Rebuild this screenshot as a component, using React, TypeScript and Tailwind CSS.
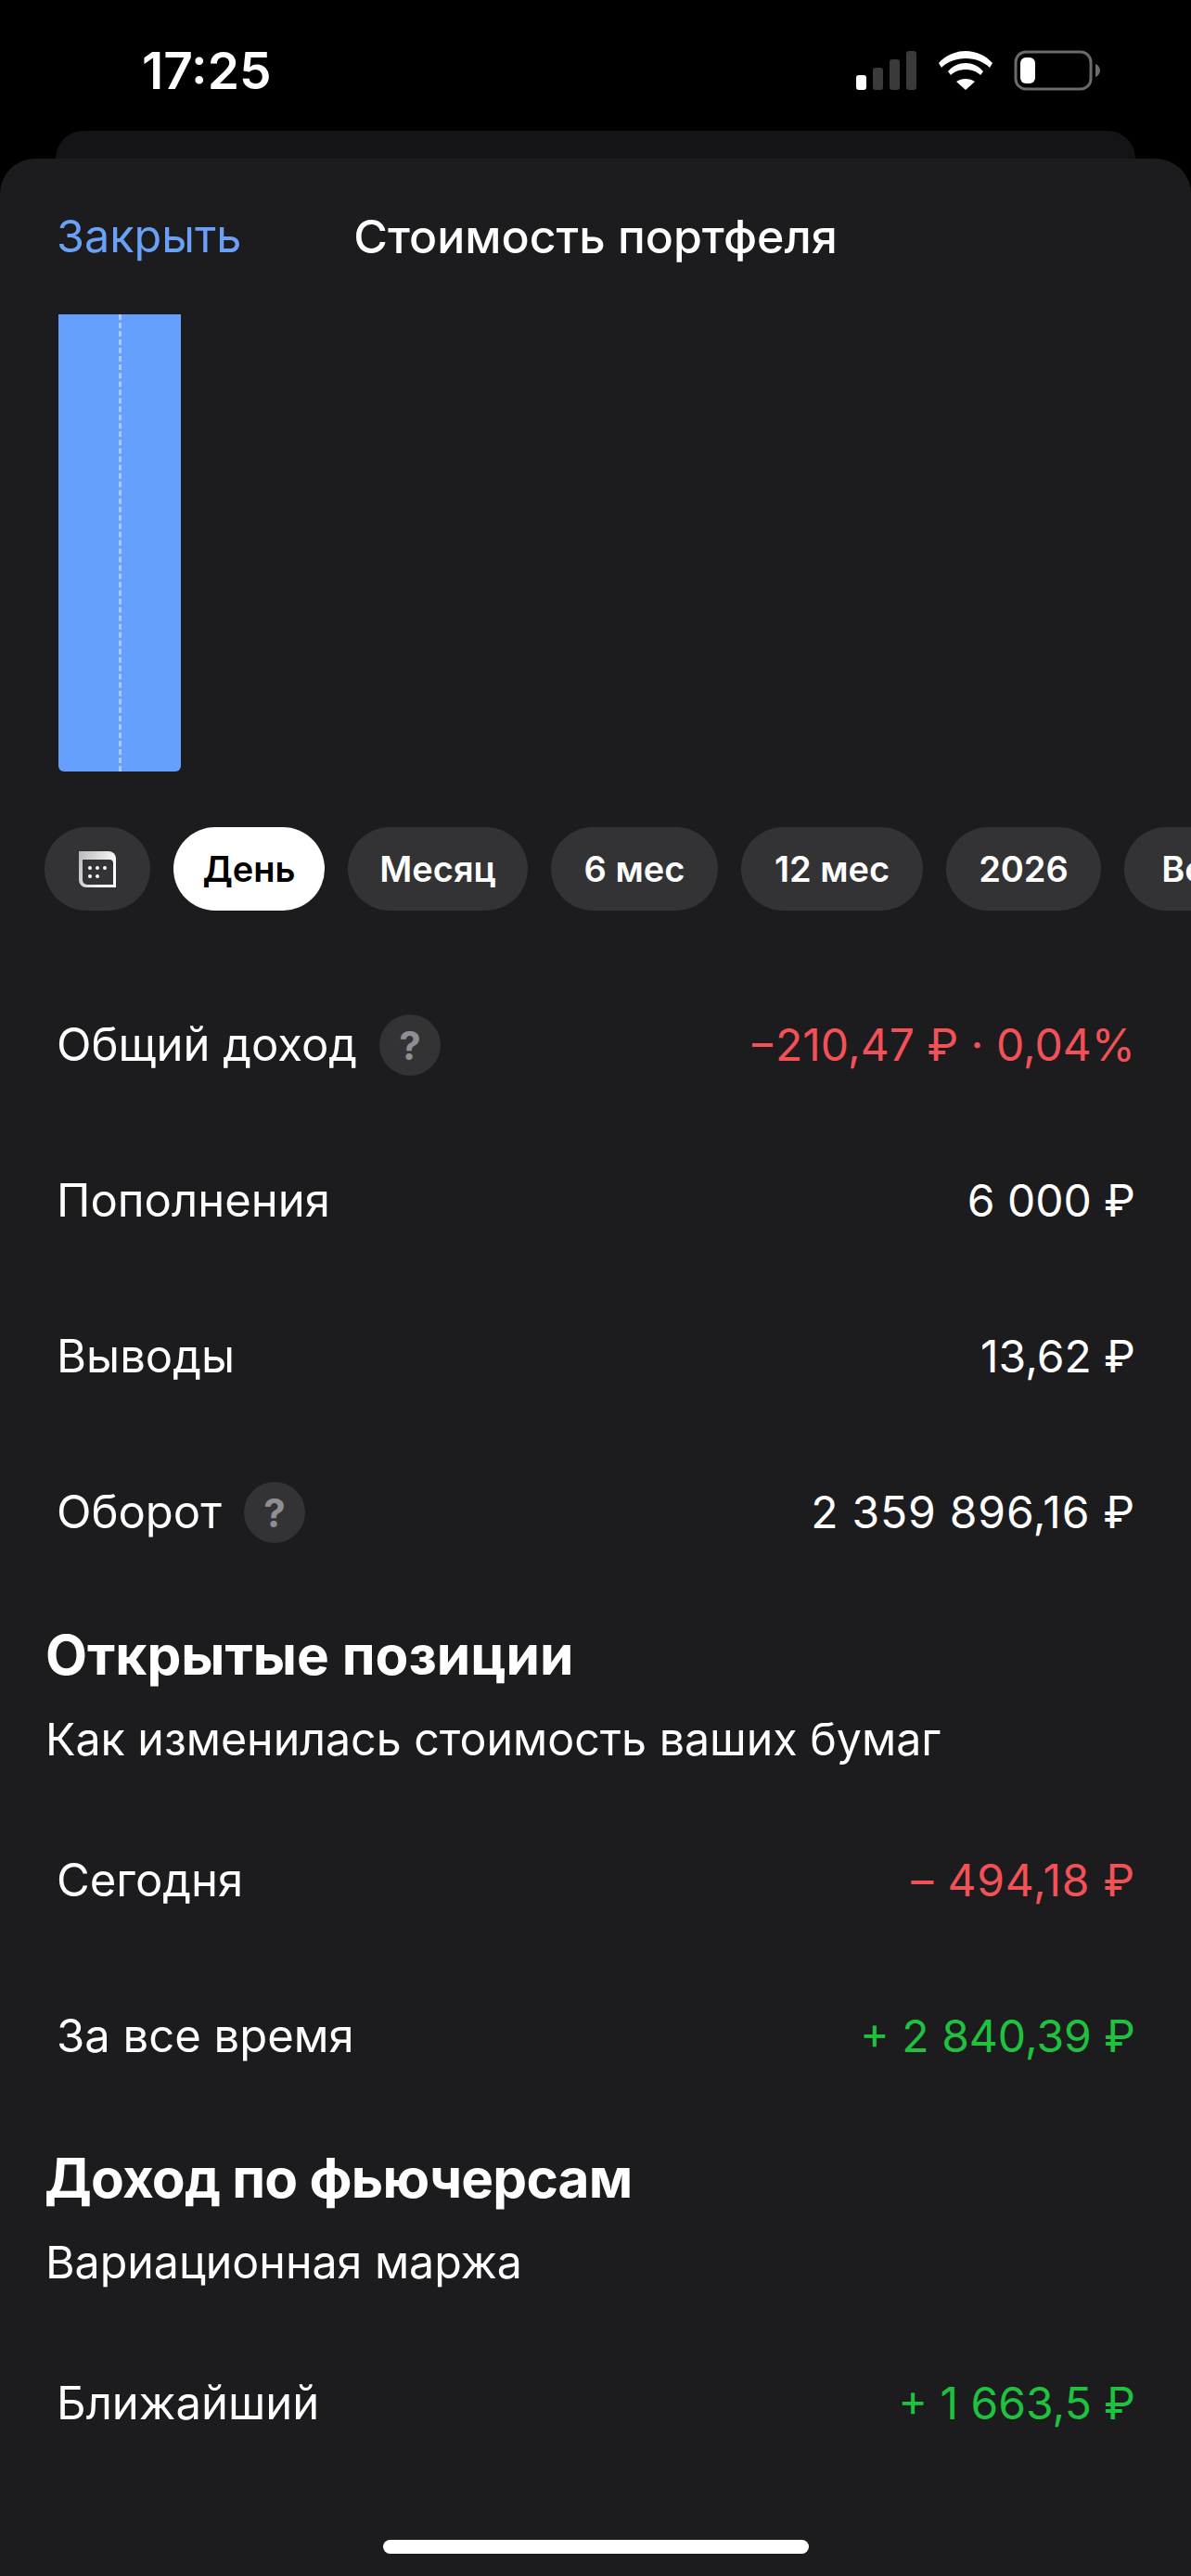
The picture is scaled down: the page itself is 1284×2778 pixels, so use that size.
import React from 'react';

const chips = [
  { label: 'Месяц', width: 'w-[194px]' },
  { label: '6 мес', width: 'w-[180px]' },
  { label: '12 мес', width: 'w-[196px]' },
  { label: '2026', width: 'w-[167px]' },
  { label: 'Все', width: 'w-[150px]' },
];

const Hint = () => (
  <span className="ml-[24px] flex h-[66px] w-[66px] items-center justify-center rounded-full bg-[#333336] text-[42px] font-bold text-[#8e8e93]">?</span>
);

const Row = ({ label, value, valueClass = 'text-white', hint = false }: { label: string; value: string; valueClass?: string; hint?: boolean }) => (
  <div className="flex h-[168px] items-center justify-between pl-[61px] pr-[60px] pt-[2px] text-[49px]">
    <div className="flex items-center text-white">
      <span>{label}</span>
      {hint && <Hint />}
    </div>
    <span className={`text-[48px] ${valueClass}`}>{value}</span>
  </div>
);

const Section = ({ title, subtitle, titleClass = '' }: { title: string; subtitle: string; titleClass?: string }) => (
  <div className="pl-[49px]">
    <div className={`text-[58.5px] leading-[68px] font-bold text-white ${titleClass}`}>{title}</div>
    <div className="mt-[29px] text-[48.3px] leading-[56px] text-white">{subtitle}</div>
  </div>
);

const CalendarIcon = () => (
  <svg width="40" height="39" viewBox="0 0 40 39">
    <defs>
      <linearGradient id="cal" x1="0" y1="0" x2="1" y2="0.4">
        <stop offset="0" stopColor="#b9b9bb" />
        <stop offset="1" stopColor="#ffffff" />
      </linearGradient>
    </defs>
    <path d="M0 0H32A8 8 0 0 1 40 8V39H8A8 8 0 0 1 0 31Z" fill="url(#cal)" />
    <path d="M4 9H33A4 4 0 0 1 37 13V36H9A5 5 0 0 1 4 31Z" fill="#333336" />
    <circle cx="12" cy="18" r="2" fill="#fff" />
    <circle cx="20" cy="18" r="2" fill="#fff" />
    <circle cx="28" cy="18" r="2" fill="#fff" />
    <circle cx="12" cy="27" r="2" fill="#fff" />
    <circle cx="20" cy="27" r="2" fill="#fff" />
  </svg>
);

const StatusIcons = () => (
  <div className="flex items-center">
    <svg width="66" height="42" viewBox="0 0 66 42">
      <rect x="0" y="26" width="11" height="16" rx="3" fill="#fff" />
      <rect x="18" y="18" width="11" height="24" rx="3" fill="#3a3a3a" />
      <rect x="36" y="9" width="11" height="33" rx="3" fill="#3a3a3a" />
      <rect x="54" y="0" width="11" height="42" rx="3" fill="#3a3a3a" />
    </svg>
    <svg className="ml-[23px]" width="58" height="42" viewBox="0 0 58 42">
      <path d="M29 8C18 8 9 12 3 18L0 13C7 5 18 0 29 0S51 5 58 13L55 18C49 12 40 8 29 8Z" fill="#fff" />
      <path d="M29 20C23 20 17 22 13 26L10 22C15 16 22 13 29 13S43 16 48 22L45 26C41 22 35 20 29 20Z" fill="#fff" />
      <path d="M29 30C25 30 22 31 19 33L29 42L39 33C36 31 33 30 29 30Z" fill="#fff" />
    </svg>
    <svg className="ml-[23px]" width="94" height="44" viewBox="0 0 94 44">
      <rect x="2" y="2" width="81" height="40" rx="11" fill="none" stroke="#6b6b6b" strokeWidth="3" />
      <rect x="7" y="8" width="16" height="28" rx="6" fill="#fff" />
      <path d="M88 15C91 16 93 19 93 22S91 28 88 29Z" fill="#6b6b6b" />
    </svg>
  </div>
);

export default function App() {
  return (
    <div className="relative h-[2778px] w-[1284px] overflow-hidden bg-black font-['Inter',sans-serif]">
      <div className="flex h-[141px] items-start justify-between pl-[153px] pr-[97px] pt-[43px]">
        <span className="text-[55px] leading-[66px] font-semibold text-white">17:25</span>
        <div className="pt-[11px]"><StatusIcons /></div>
      </div>
      <div className="mx-[60px] h-[30px] rounded-t-[30px] bg-[#141416]" />
      <div className="h-[2607px] rounded-t-[38px] bg-[#1c1c1e]">
        <div className="relative flex h-[168px] items-center justify-center">
          <span className="absolute left-[61px] text-[48.5px] text-[#6aa0f5]">Закрыть</span>
          <span className="text-[50px] font-medium text-white">Стоимость портфеля</span>
        </div>
        <div className="ml-[63px] flex h-[493px] w-[132px] justify-center rounded-b-[6px] bg-[#66a0ff]">
          <div className="h-full w-0 border-l-[3px] border-dashed border-[#a6c8fb]" />
        </div>
        <div className="mt-[60px] flex h-[90px] gap-[25px] overflow-hidden pl-[48px] text-[38px] font-semibold">
          <div className="flex w-[114px] shrink-0 items-center justify-center rounded-full bg-[#333336]"><CalendarIcon /></div>
          <div className="flex w-[163px] shrink-0 items-center justify-center rounded-full bg-white text-black">День</div>
          {chips.map(c => (
            <div key={c.label} className={`flex shrink-0 items-center justify-center rounded-full bg-[#333336] text-white ${c.width}`}>{c.label}</div>
          ))}
        </div>
        <div className="mt-[60px]">
          <Row label="Общий доход" value="−210,47 ₽ · 0,04%" valueClass="text-[#f25157]" hint />
          <Row label="Пополнения" value="6 000 ₽" />
          <Row label="Выводы" value="13,62 ₽" />
          <Row label="Оборот" value="2 359 896,16 ₽" valueClass="text-white tracking-[0.8px]" hint />
        </div>
        <div className="mt-[37px]">
          <Section title="Открытые позиции" subtitle="Как изменилась стоимость ваших бумаг" />
        </div>
        <div className="mt-[39px]">
          <Row label="Сегодня" value="– 494,18 ₽" valueClass="text-[#f25157] tracking-[0.8px]" />
          <Row label="За все время" value="+ 2 840,39 ₽" valueClass="text-[#1fc23f]" />
        </div>
        <div className="mt-[36px]">
          <Section title="Доход по фьючерсам" subtitle="Вариационная маржа" titleClass="-ml-[1px] tracking-[-0.8px]" />
        </div>
        <div className="mt-[39px]">
          <Row label="Ближайший" value="+ 1 663,5 ₽" valueClass="text-[#1fc23f]" />
        </div>
      </div>
      <div className="absolute bottom-[24px] left-[413px] h-[15px] w-[459px] rounded-full bg-white" />
    </div>
  );
}
